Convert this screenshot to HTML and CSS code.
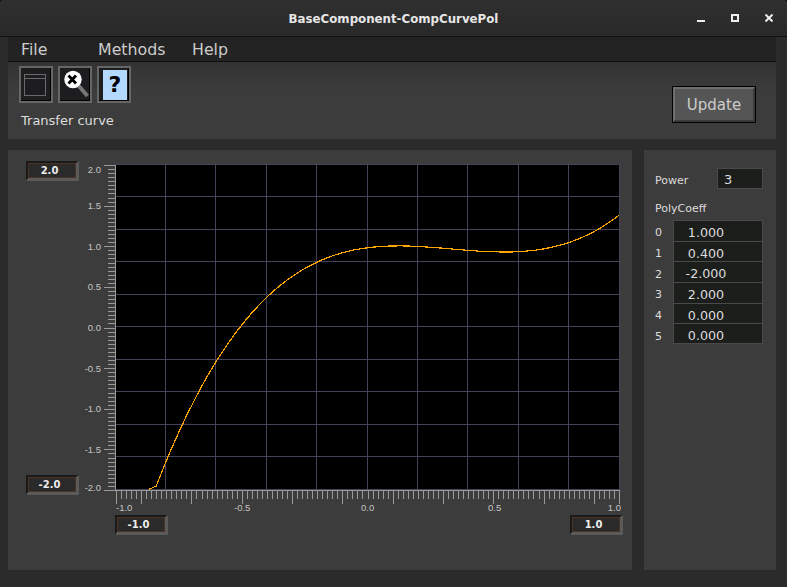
FILE: index.html
```html
<!DOCTYPE html>
<html lang="en">
<head>
    <meta charset="UTF-8">
    <title>BaseComponent-CompCurvePol</title>
    <link rel="stylesheet" href="styles.css">
</head>
<body>

<div id="window">
    <div id="titlebar">
        <span id="title">BaseComponent-CompCurvePol</span>
        <div id="controls">
            <svg width="8" height="8" viewBox="0 0 8 8"><rect class="white" x="0" y="6" width="8" height="2"/></svg>
            <svg width="8" height="8" viewBox="0 0 8 8"><path class="white" fill-rule="evenodd" d="M0 0H8V8H0ZM2 2V6H6V2Z"/></svg>
            <svg width="8" height="8" viewBox="0 0 8 8"><path class="cross" d="M0.5 0.5L7.5 7.5M7.5 0.5L0.5 7.5"/></svg>
        </div>
    </div>

    <div id="main">
        <ul id="menu">
            <li class="m-file">File</li>
            <li class="m-methods">Methods</li>
            <li>Help</li>
        </ul>

        <div id="toolbar">
            <div class="tool-left">
                <div class="tools">
                    <div class="tool">
                        <svg width="30" height="33" viewBox="0 0 30 33">
                            <rect class="win-line" x="3.5" y="6.5" width="21" height="21"/>
                            <path class="win-line" d="M3.5 10.5H24.5"/>
                        </svg>
                    </div>
                    <div class="tool">
                        <svg width="30" height="33" viewBox="0 0 30 33">
                            <path class="handle" d="M18 17L27.5 28"/>
                            <circle class="lens" cx="13" cy="11.5" r="8.7"/>
                            <path class="lens-x" d="M8.5 7.5L16 15.5M16 7.5L8.5 15.5"/>
                        </svg>
                    </div>
                    <div class="tool">
                        <div class="help">?</div>
                    </div>
                </div>
                <div class="tool-name">Transfer curve</div>
            </div>
            <button id="update">Update</button>
        </div>

        <div id="panels">
            <div id="plot-panel">
                <div class="plot-top">
                    <div class="y-range">
                        <div class="spin">2.0</div>
                        <div class="spin">-2.0</div>
                    </div>
                    <svg id="plot" width="541" height="355" viewBox="84 160 541 355"></svg>
                </div>
                <div class="x-range">
                    <div class="spin">-1.0</div>
                    <div class="spin">1.0</div>
                </div>
            </div>

            <div id="side-panel">
                <div class="power">
                    <span>Power</span>
                    <div class="power-val">3</div>
                </div>
                <div class="coeff-title">PolyCoeff</div>
                <div class="coeffs">
                    <span>0</span><div class="coeff">1.000</div>
                    <span>1</span><div class="coeff">0.400</div>
                    <span>2</span><div class="coeff">-2.000</div>
                    <span>3</span><div class="coeff">2.000</div>
                    <span>4</span><div class="coeff">0.000</div>
                    <span>5</span><div class="coeff">0.000</div>
                </div>
            </div>
        </div>
    </div>
</div>

<script src="plot.js"></script>
</body>
</html>
```

FILE: styles.css
```css
*{
    margin: 0;
    padding: 0;
    box-sizing: border-box;
}
ul{
    list-style: none;
}
html, body{
    width: 787px;
    height: 587px;
    overflow: hidden;
    background: #111;
}
body{
    font-family: "DejaVu Sans", sans-serif;
    color: #ddd;
}

#window{
    width: 787px;
    height: 587px;
    background: #2b2b2b;
    border-radius: 4px 4px 0 0;
    overflow: hidden;
}
#titlebar{
    height: 37px;
    background: linear-gradient(#303030, #292929);
    border-bottom: 1px solid #111;
    position: relative;
    display: flex;
    justify-content: center;
    align-items: center;
}
#title{
    font-size: 11.8px;
    font-weight: bold;
    color: #e6e6e6;
    margin-top: 1px;
}
#controls{
    position: absolute;
    right: 14px;
    top: 14px;
    display: flex;
    gap: 26px;
}
#controls svg{
    display: block;
}
.white{
    fill: #eee;
}
.cross{
    stroke: #eee;
    stroke-width: 2;
    fill: none;
}

#main{
    padding: 0 11px 0 8px;
}
#menu{
    height: 25px;
    background: #232323;
    border-bottom: 1px solid #0e0e0e;
    display: flex;
    padding-left: 13px;
    font-size: 15.8px;
    line-height: 26px;
    color: #ccc;
}
.m-file{
    width: 77px;
}
.m-methods{
    width: 94px;
}

#toolbar{
    height: 77px;
    background: linear-gradient(#333, #3c3c3c 40%);
    padding: 4px 20px 0 11px;
    display: flex;
    justify-content: space-between;
}
.tools{
    display: flex;
    gap: 5px;
}
.tool{
    width: 34px;
    height: 37px;
    background: #1d1d1f;
    border: 2px solid #666;
    box-shadow: inset -1px -1px 0 #000;
}
.tool svg{
    display: block;
}
.win-line{
    fill: none;
    stroke: #6a6a6a;
    stroke-width: 1;
}
.handle{
    fill: none;
    stroke: #777;
    stroke-width: 4;
}
.lens{
    fill: #fff;
}
.lens-x{
    fill: none;
    stroke: #000;
    stroke-width: 2.8;
}
.help{
    width: 24px;
    height: 30px;
    margin: 2px 0 0 4px;
    background: #b4d9ff;
    color: #000;
    font-size: 22px;
    font-weight: bold;
    line-height: 29px;
    text-align: center;
}
.tool-name{
    font-size: 13px;
    color: #ddd;
    margin: 10px 0 0 2px;
}
#update{
    width: 84px;
    height: 37px;
    margin-top: 20px;
    background: #555;
    color: #ccc;
    font-family: "DejaVu Sans", sans-serif;
    font-size: 15px;
    border-width: 3px;
    border-style: solid;
    border-color: #707070 #3a3a3a #3a3a3a #707070;
    outline: 1px solid #000;
    outline-offset: -1px;
}

#panels{
    display: flex;
    gap: 12px;
    margin-top: 11px;
}
#plot-panel{
    width: 624px;
    height: 420px;
    background: #3c3c3c;
    padding: 10px 0 0 18px;
}
.plot-top{
    display: flex;
    gap: 6px;
}
.y-range{
    width: 52px;
    height: 334px;
    margin-top: 1px;
    display: flex;
    flex-direction: column;
    justify-content: space-between;
}
#plot{
    display: block;
}
.x-range{
    width: 508px;
    margin-left: 89px;
    display: flex;
    justify-content: space-between;
}
.spin{
    width: 53px;
    height: 20px;
    background: #2a2a2a;
    border-width: 2px 3px 3px 2px;
    border-style: solid;
    border-color: #1a1a1a #5a5a5a #5a5a5a #1a1a1a;
    box-shadow: inset 0 0 0 1px #4b3222;
    color: #eee;
    font-size: 10px;
    font-weight: bold;
    line-height: 15px;
    text-align: center;
    padding-right: 5px;
}

.grid-line{
    stroke: #43435a;
    stroke-width: 1;
}
.tick{
    stroke: #9a9a9a;
    stroke-width: 1;
}
.curve{
    fill: none;
    stroke: #ffa500;
    stroke-width: 1.2;
}
.axis-label{
    font-family: "Liberation Sans", sans-serif;
    font-size: 9.5px;
    fill: #c4c4c4;
}

#side-panel{
    width: 132px;
    height: 420px;
    background: #3c3c3c;
    padding: 18px 13px 0 11px;
    font-size: 11px;
    color: #ddd;
}
.power{
    display: flex;
    justify-content: space-between;
    align-items: center;
}
.power span{
    margin-top: 3px;
}
.power-val{
    width: 46px;
    height: 21px;
    background: #1c1e1c;
    border: 1px solid #4a4a4a;
    padding-left: 6px;
    font-size: 13px;
    line-height: 21px;
}
.coeff-title{
    margin-top: 13px;
}
.coeffs{
    display: grid;
    grid-template-columns: 18px 90px;
    grid-auto-rows: 20.67px;
    align-items: center;
    margin-top: 5px;
}
.coeffs span{
    margin-top: 5px;
}
.coeff{
    height: 100%;
    background: #1c1e1c;
    border: 1px solid #4a4a4a;
    border-bottom-width: 0;
    font-size: 12.7px;
    line-height: 23px;
    text-align: center;
    padding-right: 24px;
}
.coeff:last-child{
    border-bottom-width: 1px;
}
```

FILE: plot.js
```js
// builds grid, ticks and the curve of 1 + 0.4x - 2x^2 + 2x^3
var oPlot = document.getElementById('plot');
var NS = 'http://www.w3.org/2000/svg';
var L = 116, R = 619, T = 165, B = 490;

function add(tag, attrs, txt) {
    var el = document.createElementNS(NS, tag);
    for (var k in attrs) {
        el.setAttribute(k, attrs[k]);
    }
    if (txt) el.textContent = txt;
    oPlot.appendChild(el);
    return el;
}
function line(x1, y1, x2, y2, cls) {
    add('line', {x1: x1, y1: y1, x2: x2, y2: y2, 'class': cls, 'shape-rendering': 'crispEdges'});
}
function px(x) { return L + (x + 1) * (R - L) / 2; }
function py(v) { return (T + B) / 2 - v * (B - T) / 4 + 1.5; }

add('rect', {x: L, y: T, width: R - L, height: B - T, fill: '#000'});

// grid
for (var i = 0; i <= 10; i++) {
    var gx = Math.floor(115 + i * 50.4) + 0.5;
    var gy = Math.floor(T + i * (B - T) / 10) - 0.5;
    line(gx, T - 1, gx, B, 'grid-line');
    line(L, gy, R, gy, 'grid-line');
}

// y axis
for (var i = 0; i <= 80; i++) {
    var ty = Math.round(T + i * (B - T) / 80) + 0.5;
    line(i % 10 == 0 ? 104 : 108, ty, 116, ty, 'tick');
}
line(115.5, T, 115.5, B, 'tick');
var yLabels = ['2.0', '1.5', '1.0', '0.5', '0.0', '-0.5', '-1.0', '-1.5', '-2.0'];
for (var i = 0; i < yLabels.length; i++) {
    var ly = T + i * (B - T) / 8 + 3.5;
    if (i == 0) ly = 173;
    if (i == 8) ly = 491;
    add('text', {x: 101, y: ly, 'text-anchor': 'end', 'class': 'axis-label'}, yLabels[i]);
}

// x axis
for (var i = 0; i <= 100; i++) {
    var tx = Math.round(L + i * (R - L) / 100) + 0.5;
    var big = i == 0 || i == 100 || i % 10 == 5;
    line(tx, B, tx, big ? 504 : 499, 'tick');
}
line(L, 490.5, R + 1, 490.5, 'tick');
add('text', {x: 116, y: 511, 'class': 'axis-label'}, '-1.0');
add('text', {x: 234, y: 511, 'class': 'axis-label'}, '-0.5');
add('text', {x: 361, y: 511, 'class': 'axis-label'}, '0.0');
add('text', {x: 488, y: 511, 'class': 'axis-label'}, '0.5');
add('text', {x: 621, y: 511, 'text-anchor': 'end', 'class': 'axis-label'}, '1.0');

// curve, clamped at the bottom of the range
var pts = [px(-0.87) + ',' + (B - 0.5)];
for (var x = -0.84; x <= 1.0001; x += 0.02) {
    var v = 1 + 0.4 * x - 2 * x * x + 2 * x * x * x;
    pts.push(px(x).toFixed(1) + ',' + py(v).toFixed(1));
}
add('polyline', {points: pts.join(' '), 'class': 'curve', 'shape-rendering': 'crispEdges'});
```
